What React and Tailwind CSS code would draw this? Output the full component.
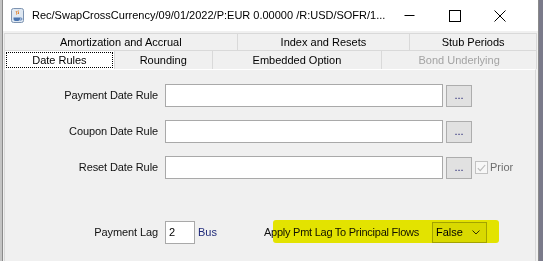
import React from "react";

const font = "font-['Liberation_Sans',Arial,sans-serif]";

const JavaIcon = () => (
    <svg width="13" height="15" viewBox="0 0 13 15" className="shrink-0">
        <rect x="0.5" y="0.5" width="12" height="14" rx="2" fill="#dfe8f2" stroke="#7d93b0"/>
        <path d="M2.5 9.5h6.5v1.5a2 2 0 0 1-2 2h-2.5a2 2 0 0 1-2-2z" fill="#4a74b0"/>
        <path d="M9 10h1a1 1 0 0 1 0 2h-1" fill="none" stroke="#4a74b0" strokeWidth="0.9"/>
        <path d="M5.5 3c-1 1 1 2 0 3.5M7.3 2.5c-1 1.2 1 2 0 3.5" fill="none" stroke="#e07b1f" strokeWidth="1"/>
    </svg>
);

const WindowControls = () => (
    <div className="ml-auto mr-[16px] flex items-center">
        <div className="flex h-[31px] w-[45px] items-center justify-center">
            <svg width="11" height="11" viewBox="0 0 11 11"><path d="M0.5 5.5h10" stroke="#000" strokeWidth="1"/></svg>
        </div>
        <div className="flex h-[31px] w-[45px] items-center justify-center">
            <svg width="12" height="12" viewBox="0 0 12 12"><rect x="0.5" y="0.5" width="11" height="11" fill="none" stroke="#000" strokeWidth="1"/></svg>
        </div>
        <div className="flex h-[31px] w-[45px] items-center justify-center">
            <svg width="12" height="12" viewBox="0 0 12 12"><path d="M0.5 0.5l11 11M11.5 0.5l-11 11" stroke="#000" strokeWidth="1"/></svg>
        </div>
    </div>
);

const Tab = ({label, width, selected, disabled, height}) => (
    <div
        className={`flex items-center justify-center border-r border-t border-[#d9d9d9] ${height} ${width} ${selected ? "bg-white" : "bg-[#f0f0f0]"}`}
    >
        {selected ? (
            <div className="flex h-[calc(100%-2px)] w-[calc(100%-2px)] items-center justify-center border border-dotted border-black">
                <span className="text-[11px] text-black">{label}</span>
            </div>
        ) : (
            <span className={`text-[11px] ${disabled ? "text-[#a3a3a3]" : "text-black"}`}>{label}</span>
        )}
    </div>
);

const DotsButton = () => (
    <div className="flex h-[22px] w-[26px] items-center justify-center border border-[#adadad] bg-[#e1e1e1] text-[11px] text-[#1a1a6e]">
        ...
    </div>
);

const RuleRow = ({label, children}) => (
    <div className="flex items-center">
        <span className="w-[153px] text-right text-[11px] tracking-[-0.1px] text-[#111]">{label}</span>
        <div className="ml-[7px] h-[23px] w-[278px] border border-[#a9a9a9] bg-white"/>
        <div className="ml-[3px]">
            <DotsButton/>
        </div>
        {children}
    </div>
);

export default function App() {
    return (
        <div className={`flex h-[261px] w-[543px] overflow-hidden ${font}`}>
            <div className="w-[2px] bg-[#c4c4c4]"/>
            <div className="flex w-[537px] flex-col border-l border-r border-[#8a8a8a]">
                {/* title bar */}
                <div className="flex h-[31px] items-center bg-white pl-[8px]">
                    <JavaIcon/>
                    <span className="ml-[8px] whitespace-nowrap text-[11px] text-black">
                        Rec/SwapCrossCurrency/09/01/2022/P:EUR 0.00000 /R:USD/SOFR/1...
                    </span>
                    <WindowControls/>
                </div>

                <div className="relative flex flex-1 flex-col bg-[#f0f0f0] pl-[1px] pt-[2px]">
                    {/* tabs */}
                    <div className="flex w-[533px] border-l border-[#d9d9d9]">
                        <Tab label="Amortization and Accrual" width="w-[233px]" height="h-[17px]"/>
                        <Tab label="Index and Resets" width="w-[173px]" height="h-[17px]"/>
                        <Tab label="Stub Periods" width="w-[127px]" height="h-[17px]"/>
                    </div>
                    <div className="flex w-[533px] border-l border-[#d9d9d9]">
                        <Tab label="Date Rules" width="w-[110px]" height="h-[19px]" selected/>
                        <Tab label="Rounding" width="w-[98px]" height="h-[19px]"/>
                        <Tab label="Embedded Option" width="w-[170px]" height="h-[19px]"/>
                        <Tab label="Bond Underlying" width="w-[155px]" height="h-[19px]" disabled/>
                    </div>

                    {/* panel */}
                    <div className="flex w-[532px] flex-1 flex-col border-l border-r border-t border-l-[#d9d9d9] border-r-[#d9d9d9] border-t-white pt-[14px]">
                        <div className="flex flex-col gap-[13px]">
                            <RuleRow label="Payment Date Rule"/>
                            <RuleRow label="Coupon Date Rule"/>
                            <RuleRow label="Reset Date Rule">
                                <div className="ml-[3px] flex items-center">
                                    <div className="flex h-[13px] w-[13px] items-center justify-center border border-[#c2c2c2] bg-[#f7f7f7]">
                                        <svg width="9" height="8" viewBox="0 0 9 8">
                                            <path d="M0.8 4.2l2.4 2.4L8.2 1" fill="none" stroke="#b8b8b8" strokeWidth="1.1"/>
                                        </svg>
                                    </div>
                                    <span className="ml-[2px] text-[11px] text-[#6d6d6d]">Prior</span>
                                </div>
                            </RuleRow>
                        </div>

                        <div className="mt-[42px] flex items-center">
                            <span className="w-[153px] text-right text-[11px] tracking-[-0.1px] text-[#111]">Payment Lag</span>
                            <div className="ml-[7px] flex h-[23px] w-[30px] items-center border border-[#a9a9a9] bg-white pl-[3px] text-[11px] text-black">
                                2
                            </div>
                            <span className="ml-[3px] text-[11px] text-[#1f2a7a]">Bus</span>
                            <span className="ml-[47px] whitespace-nowrap text-[11px] tracking-[-0.25px] text-[#111]">Apply Pmt Lag To Principal Flows</span>
                            <div className="ml-[13px] flex h-[21px] w-[55px] items-center justify-between border border-[#acacac] bg-[#e5e5e5] pl-[3px] pr-[6px] text-[11px] text-black">
                                <span>False</span>
                                <svg width="8" height="5" viewBox="0 0 8 5">
                                    <path d="M0.5 0.5l3.5 3.5 3.5-3.5" fill="none" stroke="#333" strokeWidth="1"/>
                                </svg>
                            </div>
                        </div>
                    </div>

                    {/* yellow highlighter mark */}
                    <div className="pointer-events-none absolute left-[270px] top-[189px] h-[23px] w-[226px] rounded-[3px] bg-[#f2f200] mix-blend-multiply"/>
                </div>
            </div>
            <div className="flex-1 bg-[#7a7a8a]"/>
        </div>
    );
}
